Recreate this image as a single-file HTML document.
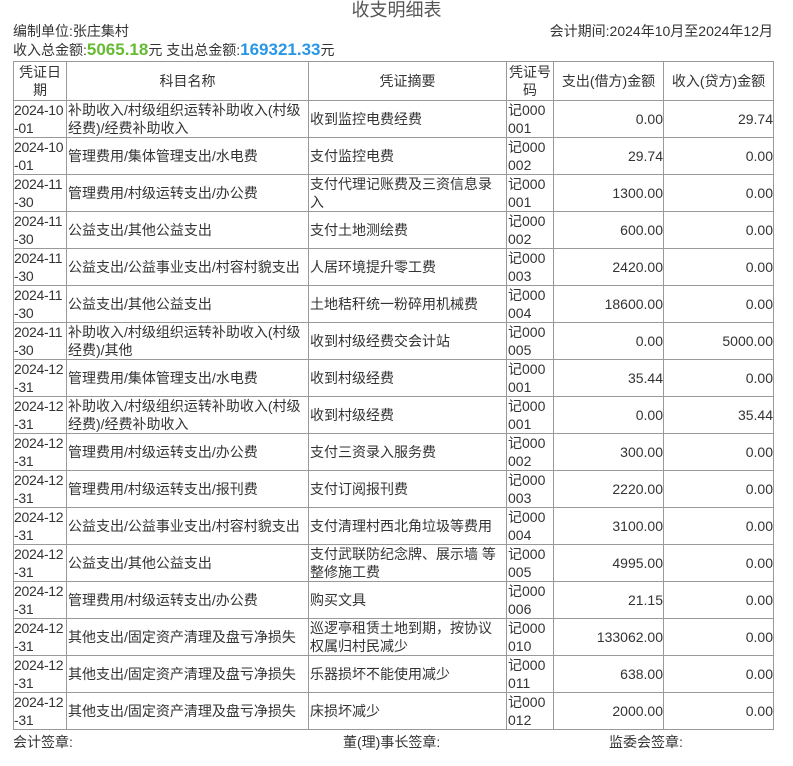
<!DOCTYPE html>
<html><head><meta charset="utf-8"><style>
body{margin:0;background:#fff;font-family:"Liberation Sans","Noto Sans CJK SC",sans-serif;color:#333;font-size:14px;width:793px;height:766px;overflow:hidden;position:relative}
.t{position:absolute;left:0;width:793px;text-align:center;top:-1px;font-size:18px;line-height:22px;color:#555}
.a{position:absolute;left:13px;top:22px;line-height:18px}
.b{position:absolute;right:20px;top:22px;line-height:18px}
.c{position:absolute;left:13px;top:40px;line-height:20px}
.g{color:#66bb33;font-weight:bold;font-size:17px}
.bl{color:#2a96e6;font-weight:bold;font-size:17px}
table{position:absolute;left:13px;top:61px;border-collapse:collapse;table-layout:fixed;width:760px}
td{border:1px solid #999;padding:0 1px;line-height:18px;height:36px;vertical-align:middle;overflow:hidden;word-break:break-all}
td:first-child{padding:0;letter-spacing:-0.3px}
tr.h td{text-align:center;height:38px;letter-spacing:0}
td.r{text-align:right;padding-right:0}
.f{position:absolute;top:733px;line-height:18px}
</style></head><body>
<div class="t">收支明细表</div>
<div class="a">编制单位:张庄集村</div>
<div class="b">会计期间:2024年10月至2024年12月</div>
<div class="c">收入总金额:<span class="g">5065.18</span>元 支出总金额:<span class="bl">169321.33</span>元</div>
<table>
<colgroup><col style="width:53px"><col style="width:242px"><col style="width:198px"><col style="width:47px"><col style="width:110px"><col style="width:110px"></colgroup>
<tr class="h"><td>凭证日期</td><td>科目名称</td><td>凭证摘要</td><td>凭证号码</td><td>支出(借方)金额</td><td>收入(贷方)金额</td></tr>
<tr><td>2024-10-01</td><td>补助收入/村级组织运转补助收入(村级经费)/经费补助收入</td><td>收到监控电费经费</td><td>记000001</td><td class="r">0.00</td><td class="r">29.74</td></tr>
<tr><td>2024-10-01</td><td>管理费用/集体管理支出/水电费</td><td>支付监控电费</td><td>记000002</td><td class="r">29.74</td><td class="r">0.00</td></tr>
<tr><td>2024-11-30</td><td>管理费用/村级运转支出/办公费</td><td>支付代理记账费及三资信息录入</td><td>记000001</td><td class="r">1300.00</td><td class="r">0.00</td></tr>
<tr><td>2024-11-30</td><td>公益支出/其他公益支出</td><td>支付土地测绘费</td><td>记000002</td><td class="r">600.00</td><td class="r">0.00</td></tr>
<tr><td>2024-11-30</td><td>公益支出/公益事业支出/村容村貌支出</td><td>人居环境提升零工费</td><td>记000003</td><td class="r">2420.00</td><td class="r">0.00</td></tr>
<tr><td>2024-11-30</td><td>公益支出/其他公益支出</td><td>土地秸秆统一粉碎用机械费</td><td>记000004</td><td class="r">18600.00</td><td class="r">0.00</td></tr>
<tr><td>2024-11-30</td><td>补助收入/村级组织运转补助收入(村级经费)/其他</td><td>收到村级经费交会计站</td><td>记000005</td><td class="r">0.00</td><td class="r">5000.00</td></tr>
<tr><td>2024-12-31</td><td>管理费用/集体管理支出/水电费</td><td>收到村级经费</td><td>记000001</td><td class="r">35.44</td><td class="r">0.00</td></tr>
<tr><td>2024-12-31</td><td>补助收入/村级组织运转补助收入(村级经费)/经费补助收入</td><td>收到村级经费</td><td>记000001</td><td class="r">0.00</td><td class="r">35.44</td></tr>
<tr><td>2024-12-31</td><td>管理费用/村级运转支出/办公费</td><td>支付三资录入服务费</td><td>记000002</td><td class="r">300.00</td><td class="r">0.00</td></tr>
<tr><td>2024-12-31</td><td>管理费用/村级运转支出/报刊费</td><td>支付订阅报刊费</td><td>记000003</td><td class="r">2220.00</td><td class="r">0.00</td></tr>
<tr><td>2024-12-31</td><td>公益支出/公益事业支出/村容村貌支出</td><td>支付清理村西北角垃圾等费用</td><td>记000004</td><td class="r">3100.00</td><td class="r">0.00</td></tr>
<tr><td>2024-12-31</td><td>公益支出/其他公益支出</td><td>支付武联防纪念牌、展示墙 等整修施工费</td><td>记000005</td><td class="r">4995.00</td><td class="r">0.00</td></tr>
<tr><td>2024-12-31</td><td>管理费用/村级运转支出/办公费</td><td>购买文具</td><td>记000006</td><td class="r">21.15</td><td class="r">0.00</td></tr>
<tr><td>2024-12-31</td><td>其他支出/固定资产清理及盘亏净损失</td><td>巡逻亭租赁土地到期，按协议权属归村民减少</td><td>记000010</td><td class="r">133062.00</td><td class="r">0.00</td></tr>
<tr><td>2024-12-31</td><td>其他支出/固定资产清理及盘亏净损失</td><td>乐器损坏不能使用减少</td><td>记000011</td><td class="r">638.00</td><td class="r">0.00</td></tr>
<tr><td>2024-12-31</td><td>其他支出/固定资产清理及盘亏净损失</td><td>床损坏减少</td><td>记000012</td><td class="r">2000.00</td><td class="r">0.00</td></tr>
</table>
<div class="f" style="left:13px">会计签章:</div>
<div class="f" style="left:343px">董(理)事长签章:</div>
<div class="f" style="left:609px">监委会签章:</div>
</body></html>
